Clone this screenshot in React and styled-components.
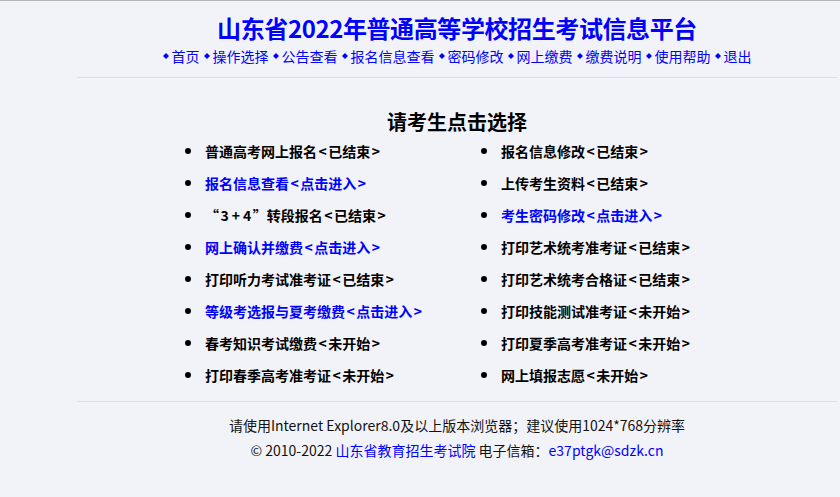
import React from "react";
import styled, { createGlobalStyle } from "styled-components";

const GlobalStyle = createGlobalStyle`
  html, body {
    margin: 0;
    padding: 0;
    background: #f2f3f9;
  }
  body {
    font-family: "Noto Sans CJK SC", "Noto Sans", sans-serif;
    border-top: 1px solid #b6b6b6;
  }
`;

const Page = styled.div`
  margin-left: 77px;
  width: 760px;
`;

const Header = styled.div`
  padding-top: 11px;
  padding-bottom: 11px;
  text-align: center;
  border-bottom: 1px solid #dcdcf8;
`;

const Title = styled.h1`
  margin: 0;
  font-size: 24px;
  line-height: 32px;
  font-weight: bold;
  color: #0000ff;
  letter-spacing: -0.4px;
`;

const Nav = styled.div`
  margin-top: 2px;
  display: flex;
  justify-content: center;
  gap: 4px;
  font-size: 14px;
  line-height: 20px;
`;

const NavLink = styled.a`
  display: inline-flex;
  align-items: center;
  gap: 3px;
  color: #0000ff;
  text-decoration: none;
`;

const Diamond = () => (
  <svg width="6" height="6" viewBox="0 0 8 8">
    <path d="M4 0 L8 4 L4 8 L0 4 Z" fill="#0000ff" />
  </svg>
);

const Main = styled.div`
  padding-top: 31px;
  padding-bottom: 10px;
  border-bottom: 1px solid #dcdcf8;
`;

const Heading = styled.h2`
  margin: 0;
  text-align: center;
  font-size: 20px;
  line-height: 26px;
  font-weight: bold;
  color: #000;
`;

const List = styled.ul`
  margin: 0 0 0 108px;
  padding: 0;
  list-style: none;
  display: grid;
  grid-template-columns: 296px 296px;
`;

const Item = styled.li`
  display: flex;
  align-items: center;
  height: 32px;
  font-size: 14px;
  font-weight: bold;
  color: ${(p) => (p.$link ? "#0000ff" : "#000")};
  cursor: ${(p) => (p.$link ? "pointer" : "default")};

  &::before {
    content: "";
    width: 6px;
    height: 6px;
    margin-right: 14px;
    border-radius: 50%;
    background: #000;
    flex: none;
  }
`;

const Narrow = styled.span`
  padding: 0 1.5px;
`;

const Footer = styled.div`
  padding-top: 11px;
  text-align: center;
  font-size: 14px;
  line-height: 25px;
  color: #111;
`;

const FootLink = styled.a`
  color: #0000ff;
  text-decoration: none;
`;

const navItems = [
  "首页",
  "操作选择",
  "公告查看",
  "报名信息查看",
  "密码修改",
  "网上缴费",
  "缴费说明",
  "使用帮助",
  "退出",
];

const items = [
  { text: "普通高考网上报名<已结束>" },
  { text: "报名信息修改<已结束>" },
  { text: "报名信息查看<点击进入>", link: true },
  { text: "上传考生资料<已结束>" },
  { text: "“3+4”转段报名<已结束>" },
  { text: "考生密码修改<点击进入>", link: true },
  { text: "网上确认并缴费<点击进入>", link: true },
  { text: "打印艺术统考准考证<已结束>" },
  { text: "打印听力考试准考证<已结束>" },
  { text: "打印艺术统考合格证<已结束>" },
  { text: "等级考选报与夏考缴费<点击进入>", link: true },
  { text: "打印技能测试准考证<未开始>" },
  { text: "春考知识考试缴费<未开始>" },
  { text: "打印夏季高考准考证<未开始>" },
  { text: "打印春季高考准考证<未开始>" },
  { text: "网上填报志愿<未开始>" },
];

// the old page font spreads the ascii signs a little wider than ours
const spread = (text) =>
  text.split(/([<>+0-9])/).map((part, i) =>
    i % 2 ? <Narrow key={i}>{part}</Narrow> : part
  );

export default function App() {
  return (
    <>
      <GlobalStyle />
      <Page>
        <Header>
          <Title>山东省2022年普通高等学校招生考试信息平台</Title>
          <Nav>
            {navItems.map((n) => (
              <NavLink key={n} href="#">
                <Diamond />
                {n}
              </NavLink>
            ))}
          </Nav>
        </Header>
        <Main>
          <Heading>请考生点击选择</Heading>
          <List>
            {items.map((it) => (
              <Item key={it.text} $link={it.link}>
                {spread(it.text)}
              </Item>
            ))}
          </List>
        </Main>
        <Footer>
          <div>请使用Internet Explorer8.0及以上版本浏览器；建议使用1024*768分辨率</div>
          <div>
            © 2010-2022 <FootLink href="#">山东省教育招生考试院</FootLink> 电子信箱：
            <FootLink href="#">e37ptgk@sdzk.cn</FootLink>
          </div>
        </Footer>
      </Page>
    </>
  );
}
